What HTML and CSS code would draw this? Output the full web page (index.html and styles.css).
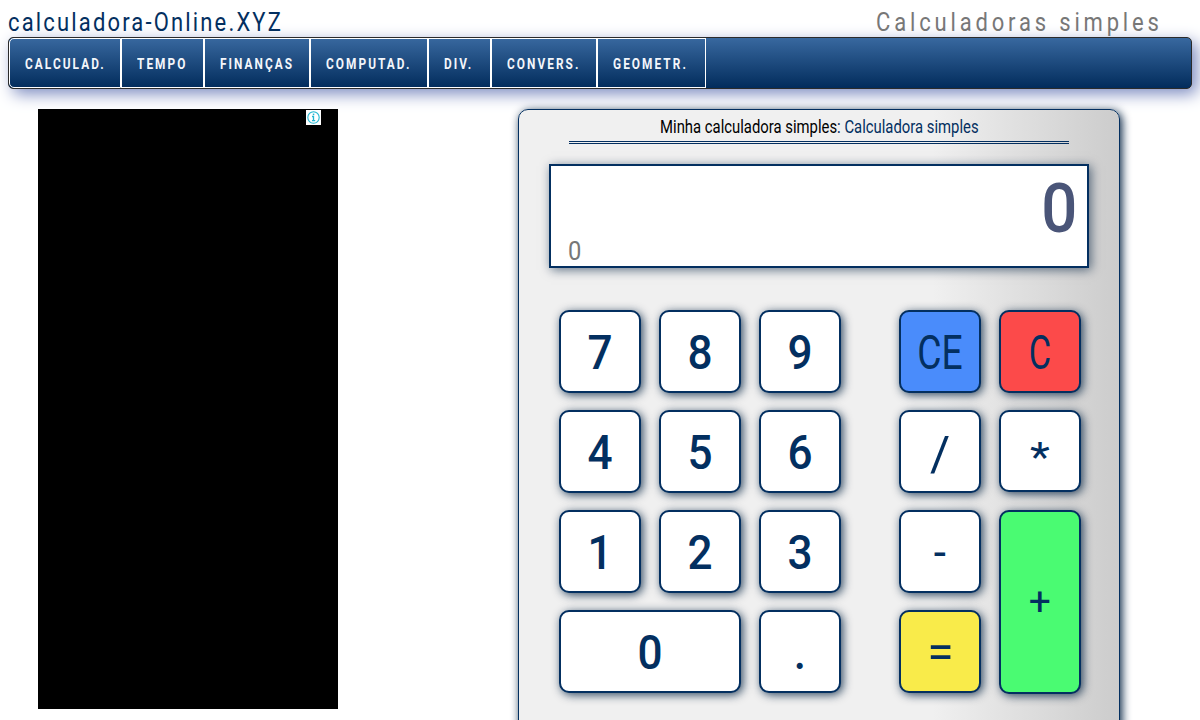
FILE: index.html
```html
<!DOCTYPE html>
<html lang="pt">
<head>
<meta charset="utf-8">
<title>Calculadoras simples</title>
<link rel="stylesheet" href="styles.css">
</head>
<body>
<header class="top">
  <a class="brand">calculadora-Online.XYZ</a>
  <h1 class="page-title">Calculadoras simples</h1>
</header>
<nav class="menu">
  <a class="w1"><span>CALCULAD.</span></a>
  <a class="w2"><span>TEMPO</span></a>
  <a class="w3"><span>FINANÇAS</span></a>
  <a class="w4"><span>COMPUTAD.</span></a>
  <a class="w5"><span>DIV.</span></a>
  <a class="w6"><span>CONVERS.</span></a>
  <a class="w7"><span>GEOMETR.</span></a>
</nav>
<main class="content">
  <aside class="ad">
    <svg class="info" viewBox="0 0 15 15"><rect width="15" height="15" fill="#fff"/><circle cx="7.5" cy="7.5" r="5.7" fill="none" stroke="#22b7d2" stroke-width="1.1"/><path d="M6 6.5h1.5v4M6 10.7h3.2" fill="none" stroke="#22b7d2" stroke-width="1.3"/><rect x="6.8" y="3.6" width="1.5" height="1.5" fill="#22b7d2"/></svg>
  </aside>
  <section class="calc">
    <h2 class="calc-title"><span>Minha calculadora simples<b>: Calculadora simples</b></span></h2>
    <div class="display">
      <div class="result"><span>0</span></div>
      <div class="memory"><span>0</span></div>
    </div>
    <div class="keys">
      <button><span>7</span></button><button><span>8</span></button><button><span>9</span></button><button class="op ce"><span>CE</span></button><button class="last c"><span>C</span></button>
      <button><span>4</span></button><button><span>5</span></button><button><span>6</span></button><button class="op slash"><span>/</span></button><button class="last star"><span>*</span></button>
      <button><span>1</span></button><button><span>2</span></button><button><span>3</span></button><button class="op"><span>-</span></button><button class="last plus"><span>+</span></button>
      <button class="zero"><span>0</span></button><button><span>.</span></button><button class="op equal"><span>=</span></button>
    </div>
  </section>
</main>
</body>
</html>
```
FILE: styles.css
```css
* { box-sizing: border-box; }
html { overflow: hidden; }
body { margin: 0; padding: 0 8px; height: 720px; background: #fff; font-family: Roboto, sans-serif; color: #032f60; }
.top { height: 37px; display: flex; justify-content: space-between; padding: 8px 29px 0 0; font-size: 25px; line-height: 30px; white-space: nowrap; }
.brand { letter-spacing: 2.45px; transform: scaleX(.88); transform-origin: left; }
.page-title { margin: 0; font-size: 25px; font-weight: 400; color: #777; letter-spacing: 4.35px; transform: scaleX(.88); transform-origin: right; }
.menu { height: 52px; display: flex; border: 1px solid #2b2b2b; border-radius: 5px; background: linear-gradient(#38689f, #022c5c); box-shadow: 5px 5px 16px #7d8cc0; }
.menu a { border: 1px solid #fff; height: 50px; padding-left: 15px; line-height: 50px; font-size: 15px; font-weight: 700; color: #f3f6fb; white-space: nowrap; }
.menu a:first-child { border-radius: 5px 0 0 5px; }
.menu span { display: inline-block; letter-spacing: 2.6px; transform: scaleX(.79); transform-origin: left; }
.w1 { width: 112px; } .w2 { width: 83px; } .w3 { width: 106px; } .w4 { width: 118px; }
.w5 { width: 63px; } .w6 { width: 106px; } .w7 { width: 109px; }
.content { display: flex; gap: 180px; padding: 20px 0 0 30px; }
.ad { width: 300px; height: 600px; background: #000; padding: 1px 17px 0 0; }
.info { display: block; width: 15px; height: 15px; margin-left: auto; }
.calc { width: 602px; height: 640px; padding: 0 30px; border: 1px solid #032f60; border-radius: 10px; background: linear-gradient(90deg, #f0f0f0 69%, #ccc); box-shadow: 2px 2px 10px #032040; }
.calc-title { display: flex; justify-content: center; width: 500px; height: 34px; margin: 0 auto; border-bottom: 3px double #032f60; font-size: 18.5px; line-height: 34px; font-weight: 400; color: #000; white-space: nowrap; }
.calc-title span { display: inline-block; transform: scaleX(.803); }
.calc-title b { font-weight: 400; color: #032f60; }
.display { height: 104px; margin-top: 20px; padding: 2px 12px 0 18px; border: 2px solid #032f60; background: #fff; box-shadow: 2px 2px 10px #03204099; }
.display span { display: inline-block; }
.result { height: 70px; line-height: 81px; text-align: right; font-size: 69px; font-weight: 500; color: #4a5578; }
.result span { transform: translateX(2px) scaleX(.92); transform-origin: right; }
.memory { height: 26px; line-height: 28px; font-size: 25px; color: #777; }
.memory span { transform: translateX(-1px) scaleX(.95); transform-origin: left; }
.keys { display: grid; grid-template-columns: 82px 82px 82px 82px 82px; grid-auto-rows: 83px; gap: 17px 18px; padding: 42px 0 0 10px; }
.keys button { display: flex; align-items: center; justify-content: center; padding: 0; border: 2px solid #032f60; border-radius: 10px; background: #fff; color: #032f60; font: 500 49px/1 Roboto, sans-serif; box-shadow: 2px 2px 10px #032040cc; }
.keys span { display: block; transform: translateY(.5px) scaleX(.9); }
.keys .op, .keys .last { margin-left: 40px; margin-right: -40px; font-weight: 400; }
.keys .ce { background: #4a8cfb; }
.keys .ce span { transform: translateY(.5px) scaleX(.76); }
.keys .c { background: #fc4a4a; }
.keys .c span { transform: translateY(.5px) scaleX(.7); }
.keys .slash span { transform: translateY(2px); }
.keys .star { height: 82px; font-size: 46px; }
.keys .star span { transform: translateY(6px) scaleY(.9); }
.keys .plus { grid-row: span 2; height: 184px; background: #4afb72; font-size: 42px; }
.keys .plus span { transform: scale(.93); }
.keys .equal { background: #f9eb4a; }
.keys .equal span { transform: scaleX(.98); }
.keys .zero { grid-column: span 2; }
```
